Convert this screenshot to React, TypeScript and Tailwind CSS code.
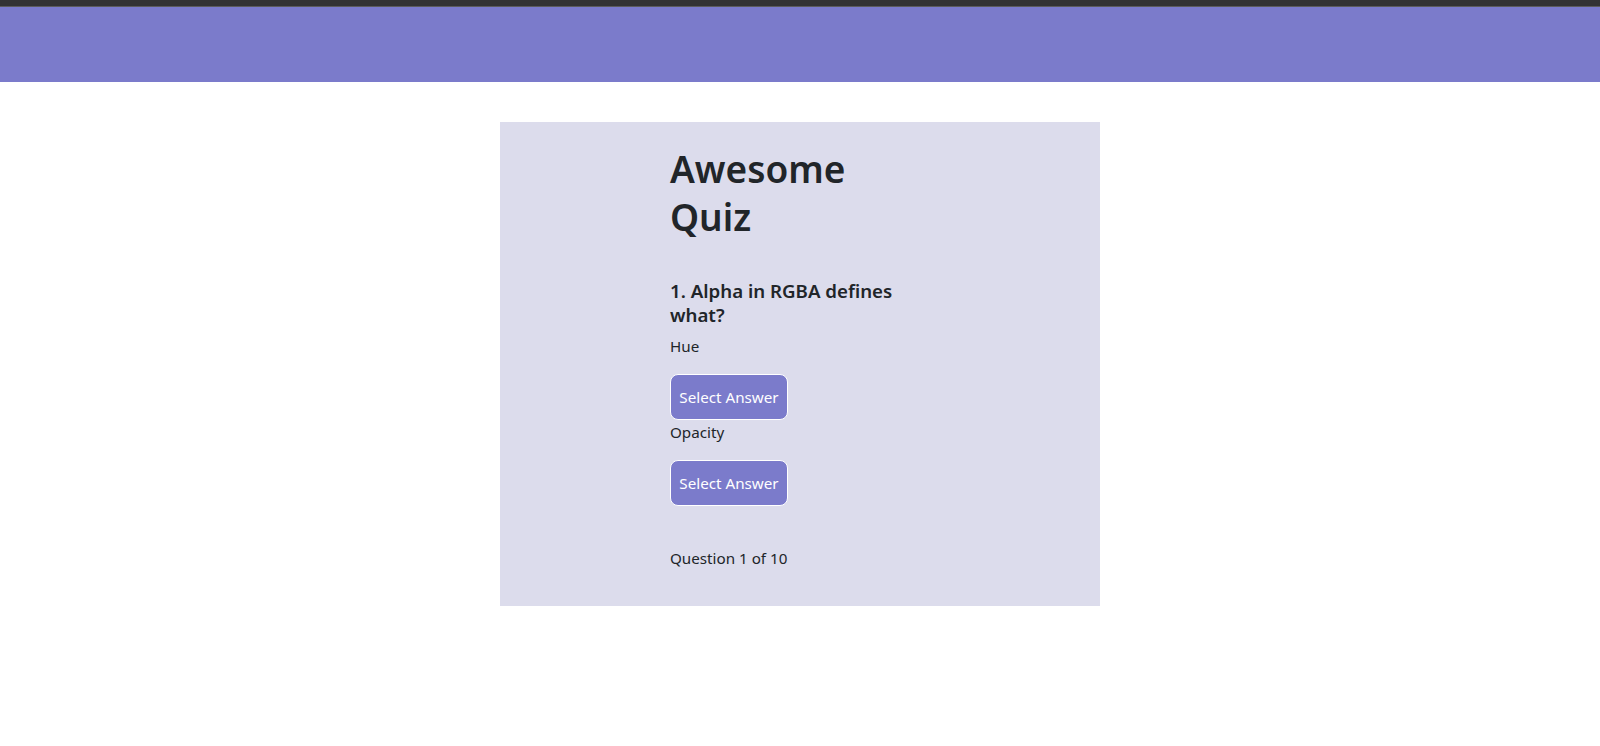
// Quiz Page

import React from 'react';

const answers = ['Hue', 'Opacity'];

const App: React.FC = () => {
  return (
    <div className="min-h-screen bg-white text-[#212529] font-['Noto_Sans',sans-serif]">
      <div className="h-[6px] bg-[#333333]" />
      <div className="h-px bg-[#5c5c5c]" />
      <header className="h-[75px] bg-[#7b7bcb]" />

      <main className="flex justify-center pt-[40px]">
        <div className="w-[600px] bg-[#dcdcec] pt-[23px] pb-[20px]">
          <div className="mx-auto w-[260px]">
            <h1 className="text-[37px] leading-[48px] font-semibold mb-[38px]">Awesome Quiz</h1>
            <h5 className="text-[18.7px] leading-[24px] font-semibold mb-[7px]">
              1. Alpha in RGBA defines what?
            </h5>
            {answers.map((a) => (
              <div key={a}>
                <p className="text-[15.2px] leading-[24px] mb-[16px]">{a}</p>
                <button className="h-[46px] w-[118px] rounded-[8px] border border-white bg-[#7b7bcb] text-[15.2px] text-white">
                  Select Answer
                </button>
              </div>
            ))}
            <p className="mt-[40px] mb-[16px] text-[15.2px] leading-[24px]">Question 1 of 10</p>
          </div>
        </div>
      </main>
    </div>
  );
};

export default App;
